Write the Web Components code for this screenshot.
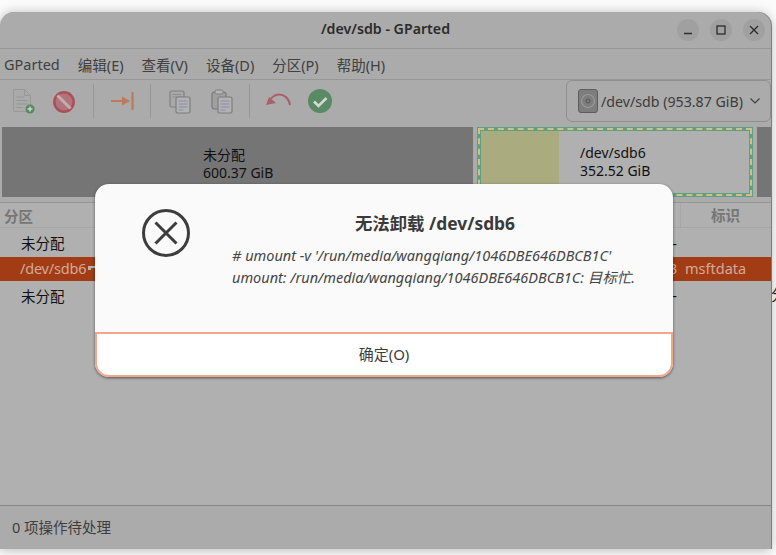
<!DOCTYPE html>
<html>
<head>
<meta charset="utf-8">
<title>GParted</title>
<style>
  html, body { margin: 0; height: 100%; background: #fbfbfb; overflow: hidden; }
  body { font-family: "Noto Sans", "Noto Sans CJK SC", sans-serif; font-size: 14.5px; }
</style>
</head>
<body>
<gp-desktop>
  <gp-window>
    <gp-titlebar title="/dev/sdb - GParted"></gp-titlebar>
    <gp-menubar>
      <span>GParted</span><span>编辑(E)</span><span>查看(V)</span><span>设备(D)</span><span>分区(P)</span><span>帮助(H)</span>
    </gp-menubar>
    <gp-toolbar></gp-toolbar>
    <gp-diskmap></gp-diskmap>
    <gp-table></gp-table>
    <gp-statusbar>0 项操作待处理</gp-statusbar>
  </gp-window>
  <gp-dialog heading="无法卸载 /dev/sdb6" button="确定(O)">
    <div># umount -v '/run/media/wangqiang/1046DBE646DBCB1C'</div>
    <div>umount: /run/media/wangqiang/1046DBE646DBCB1C: 目标忙.</div>
  </gp-dialog>
</gp-desktop>

<script>
  const CJK = '"Noto Sans", "Noto Sans CJK SC", sans-serif';

  class GpDesktop extends HTMLElement {
    constructor() {
      super();
      this.attachShadow({ mode: "open" });
      this.shadowRoot.innerHTML = `
        <style>
          :host { display: block; position: relative; width: 776px; height: 555px; overflow: hidden; }
          .behind { position: absolute; left: 771px; top: 283px; font-size: 15px; color: #222; font-family: ${CJK}; }
        </style>
        <div class="behind">分</div>
        <slot></slot>
      `;
    }
  }

  class GpWindow extends HTMLElement {
    constructor() {
      super();
      this.attachShadow({ mode: "open" });
      this.shadowRoot.innerHTML = `
        <style>
          :host {
            display: flex;
            flex-direction: column;
            box-sizing: border-box;
            width: 771px;
            height: 537px;
            margin-top: 12px;
            background: #ababab;
            border-radius: 14px 14px 0 0;
            box-shadow: 0 1px 12px rgba(0, 0, 0, 0.28), 1px 0 0 #8f8f8f;
            overflow: hidden;
            position: relative;
          }
        </style>
        <slot></slot>
      `;
    }
  }

  class GpTitlebar extends HTMLElement {
    constructor() {
      super();
      this.attachShadow({ mode: "open" });
    }
    connectedCallback() {
      this.shadowRoot.innerHTML = `
        <style>
          :host {
            display: flex;
            flex: none;
            box-sizing: border-box;
            height: 37px;
            align-items: center;
            justify-content: center;
            border-bottom: 1px solid #979797;
            position: relative;
            padding-bottom: 3px;
          }
          .title { font-size: 14.2px; font-weight: 600; color: #2b2b2b; }
          .btns { position: absolute; right: 6px; top: 7px; display: flex; gap: 11px; }
          .btn { width: 22px; height: 22px; border-radius: 50%; background: #a0a0a0; display: flex; align-items: center; justify-content: center; }
          svg { width: 12px; height: 12px; stroke: #2d2d2d; fill: none; stroke-width: 1.3; }
        </style>
        <div class="title">${this.getAttribute("title")}</div>
        <div class="btns">
          <div class="btn"><svg viewBox="0 0 12 12"><path d="M2 9.5h8"/></svg></div>
          <div class="btn"><svg viewBox="0 0 12 12"><rect x="2" y="2" width="8" height="8"/></svg></div>
          <div class="btn"><svg viewBox="0 0 12 12"><path d="M2 2l8 8M10 2l-8 8"/></svg></div>
        </div>
      `;
    }
  }

  class GpMenubar extends HTMLElement {
    constructor() {
      super();
      this.attachShadow({ mode: "open" });
      this.shadowRoot.innerHTML = `
        <style>
          :host {
            display: flex;
            flex: none;
            box-sizing: border-box;
            height: 31px;
            align-items: center;
            gap: 18px;
            padding-left: 4px;
            border-bottom: 1px solid #979797;
            color: #404040;
            font-size: 14.5px;
          }
          ::slotted(span) { white-space: nowrap; }
        </style>
        <slot></slot>
      `;
    }
  }

  class GpToolbar extends HTMLElement {
    constructor() {
      super();
      this.attachShadow({ mode: "open" });
      this.shadowRoot.innerHTML = `
        <style>
          :host {
            display: flex;
            flex: none;
            box-sizing: border-box;
            height: 47px;
            align-items: flex-start;
            padding-left: 2px;
            position: relative;
          }
          .tool { width: 42px; height: 42px; display: flex; align-items: center; justify-content: center; flex: none; }
          .tool svg { width: 26px; height: 26px; }
          .stop { margin: 0 1px 0 -1px; }
          .sep { width: 1px; height: 34px; background: #999; margin: 4px 7px 0; flex: none; }
          .combo {
            margin-left: auto;
            box-sizing: border-box;
            width: 205px;
            height: 42px;
            border: 1px solid #8f8f8f;
            border-radius: 6px;
            display: flex;
            align-items: center;
            padding-left: 11px;
            gap: 3px;
            color: #3c3c3c;
            font-size: 14.2px;
            white-space: nowrap;
          }
          .combo .chev { margin-left: 4px; }
        </style>
        <div class="tool"><svg viewBox="0 0 26 26" fill="none">
          <path d="M3.500 1.500h11l6 6v15a1 1 0 0 1-1 1h-15a1 1 0 0 1-1-1z" fill="#aaaaaa" stroke="#989898"/>
          <path d="M14.500 1.500v6h6" stroke="#989898"/>
          <path d="M6.500 9h8M6.500 12.500h11M6.500 16h11M6.500 19.500h6" stroke="#969696"/>
          <circle cx="20" cy="21" r="4.500" fill="#558a60"/>
          <path d="M17.500 21h5M20 18.500v5" stroke="#c9d8cc" stroke-width="1.500"/>
        </svg></div>
        <div class="tool stop"><svg viewBox="0 0 26 26" fill="none">
          <circle cx="13" cy="14" r="9.700" fill="#b0757b" stroke="#ad4f58" stroke-width="2.500"/>
          <path d="M6.500 7.500l13 13" stroke="#c5adaf" stroke-width="3"/>
        </svg></div>
        <div class="sep"></div>
        <div class="tool"><svg viewBox="0 0 26 26" fill="none">
          <path d="M2 13h18" stroke="#bd7a5d" stroke-width="2"/>
          <path d="M13 8.500l8 4.500-8 4.500z" fill="#bd7a5d"/>
          <path d="M23.500 4v18" stroke="#bd7a5d" stroke-width="2.200"/>
        </svg></div>
        <div class="sep"></div>
        <div class="tool"><svg viewBox="0 0 26 26" fill="none">
          <rect x="4" y="3" width="14" height="16" rx="1.500" fill="#a8a8a8" stroke="#808080" stroke-width="1.200"/>
          <path d="M6.500 6.500h9M6.500 9h9" stroke="#8d8d8d"/>
          <rect x="10" y="9" width="14" height="16" rx="1.500" fill="#b2b2b2" stroke="#7d7d7d" stroke-width="1.200"/>
          <path d="M12.500 13h9M12.500 16h9M12.500 19h9M12.500 22h5" stroke="#8c8cb0"/>
        </svg></div>
        <div class="tool"><svg viewBox="0 0 26 26" fill="none">
          <rect x="4" y="4" width="14" height="17" rx="2.500" fill="#a0a0a0" stroke="#787878" stroke-width="1.200"/>
          <rect x="7" y="2" width="8" height="4" rx="1.500" fill="#b5b5b5" stroke="#7c7c7c"/>
          <rect x="10" y="9" width="14" height="16" rx="1.500" fill="#b2b2b2" stroke="#7d7d7d" stroke-width="1.200"/>
          <path d="M12.500 13h9M12.500 16h9M12.500 19h9M12.500 22h5" stroke="#8c8cb0"/>
        </svg></div>
        <div class="sep"></div>
        <div class="tool"><svg viewBox="0 0 26 26" fill="none">
          <path d="M25 17C24 10 19 6.500 14 6.500 11 6.500 8.500 8 6 10.500" stroke="#ad5f67" stroke-width="2"/>
          <path d="M1 17l3-8 7 6z" fill="#ad5f67"/>
        </svg></div>
        <div class="tool"><svg viewBox="0 0 26 26" fill="none">
          <circle cx="13" cy="13" r="12" fill="#598a63"/>
          <path d="M7 13.500l4.500 4.500 8-8" stroke="#d2d8d2" stroke-width="2.600"/>
        </svg></div>
        <div class="combo">
          <svg width="20" height="24" viewBox="0 0 20 24" fill="none">
            <rect x="0.500" y="0.500" width="19" height="23" rx="2.500" fill="#7d7d7d" stroke="#5e5e5e"/>
            <circle cx="10" cy="12" r="6.500" stroke="#9a9a9a" stroke-width="1.200"/>
            <circle cx="10" cy="12" r="2" stroke="#585858"/>
          </svg>
          <span>/dev/sdb (953.87 GiB)</span>
          <svg class="chev" width="10" height="6" viewBox="0 0 10 6" fill="none"><path d="M0.500 0.500l4.500 4.500 4.500-4.500" stroke="#3c3c3c" stroke-width="1.100"/></svg>
        </div>
      `;
    }
  }

  class GpDiskmap extends HTMLElement {
    constructor() {
      super();
      this.attachShadow({ mode: "open" });
      this.shadowRoot.innerHTML = `
        <style>
          :host {
            display: flex;
            flex: none;
            box-sizing: border-box;
            height: 70px;
            padding: 0 0 0 2px;
            gap: 4px;
            color: #111;
            font-size: 14px;
            line-height: 18px;
          }
          .free { background: #757575; }
          .big { width: 471px; padding: 19px 0 0 201px; box-sizing: border-box; }
          .small { width: 14px; }
          .part {
            width: 276px;
            box-sizing: border-box;
            border: 4px solid #5fa085;
            outline: 2px dashed #c9c387;
            outline-offset: -3px;
            display: flex;
            background: #b0b0b0;
          }
          .used { width: 78px; background: #aaab7f; }
          .label { padding: 13px 0 0 21px; }
        </style>
        <div class="free big">未分配<br>600.37 GiB</div>
        <div class="part">
          <div class="used"></div>
          <div class="label">/dev/sdb6<br>352.52 GiB</div>
        </div>
        <div class="free small"></div>
      `;
    }
  }

  class GpTable extends HTMLElement {
    constructor() {
      super();
      this.attachShadow({ mode: "open" });
      this.shadowRoot.innerHTML = `
        <style>
          :host {
            display: block;
            flex: 1;
            margin-top: 5px;
            background: #b0b0b0;
            border-top: 1px solid #979797;
            color: #111;
            font-size: 14.5px;
          }
          .row { display: flex; height: 24px; box-sizing: border-box; align-items: center; white-space: nowrap; }
          .first { padding-bottom: 5px; }
          .last { padding-top: 4px; }
          .head {
            height: 24px;
            margin-bottom: 5px;
            border-bottom: 1px solid #a6a6a6;
            font-weight: 700;
            color: #767676;
            padding-left: 4px;
            box-sizing: content-box;
          }
          .name { width: 669px; padding-left: 21px; box-sizing: border-box; flex: none; }
          .fs { width: 8px; margin-right: 8px; text-align: right; flex: none; }
          .head .lead { width: 676px; flex: none; }
          .head .flags { border-left: 1px solid #a6a6a6; height: 24px; padding-left: 30px; line-height: 24px; }
          .sel { background: #a23c15; color: #d3aa98; padding-bottom: 3px; }
          .sel .name { padding-left: 20px; display: flex; align-items: center; gap: 2px; letter-spacing: -0.2px; }
        </style>
        <div class="row head"><div class="lead">分区</div><div class="flags">标识</div></div>
        <div class="row first"><div class="name">未分配</div><div class="fs">-</div></div>
        <div class="row sel">
          <div class="name">/dev/sdb6
            <svg width="8" height="6" viewBox="0 0 8 6"><path d="M0 1h8v2H3v2H0z" fill="#b9b3ae"/></svg>
          </div>
          <div class="fs">3</div>
          <div class="flags">msftdata</div>
        </div>
        <div class="row last"><div class="name">未分配</div><div class="fs">-</div></div>
      `;
    }
  }

  class GpStatusbar extends HTMLElement {
    constructor() {
      super();
      this.attachShadow({ mode: "open" });
      this.shadowRoot.innerHTML = `
        <style>
          :host {
            display: flex;
            flex: none;
            box-sizing: border-box;
            height: 44px;
            align-items: center;
            padding: 0 0 2px 12px;
            border-top: 1px solid #858585;
            color: #3d3d3d;
            font-size: 14.5px;
          }
        </style>
        <slot></slot>
      `;
    }
  }

  class GpDialog extends HTMLElement {
    constructor() {
      super();
      this.attachShadow({ mode: "open" });
    }
    connectedCallback() {
      this.shadowRoot.innerHTML = `
        <style>
          :host {
            display: flex;
            flex-direction: column;
            position: absolute;
            left: 95px;
            top: 184px;
            width: 578px;
            height: 193px;
            box-sizing: border-box;
            background: #fafafa;
            border-radius: 14px;
            box-shadow: 0 1px 3px rgba(0, 0, 0, 0.55);
            color: #3d3d3d;
          }
          .body { flex: 1; display: flex; padding: 25px 0 0 47px; }
          .icon { width: 48px; height: 48px; flex: none; margin-right: 42px; }
          .text { width: 406px; flex: none; }
          h1 { margin: 2px 0 9px; font-size: 17.4px; line-height: 24px; font-weight: 700; text-align: center; color: #3a3a3a; }
          .msg { font-size: 14.5px; line-height: 22px; font-style: italic; white-space: nowrap; color: #444; }
          button {
            flex: none;
            height: 45px;
            padding: 0 0 2px;
            border: 2px solid #f2a68e;
            border-radius: 0 0 14px 14px;
            background: #fff;
            color: #3d3d3d;
            font: inherit;
            font-size: 15px;
          }
        </style>
        <div class="body">
          <svg class="icon" viewBox="0 0 48 48" fill="none" stroke="#3d3d3d">
            <circle cx="24" cy="24" r="22.500" stroke-width="3"/>
            <path d="M13.500 13.500l21 21M34.500 13.500l-21 21" stroke-width="3"/>
          </svg>
          <div class="text">
            <h1>${this.getAttribute("heading")}</h1>
            <div class="msg"><slot></slot></div>
          </div>
        </div>
        <button>${this.getAttribute("button")}</button>
      `;
    }
  }

  customElements.define("gp-desktop", GpDesktop);
  customElements.define("gp-window", GpWindow);
  customElements.define("gp-titlebar", GpTitlebar);
  customElements.define("gp-menubar", GpMenubar);
  customElements.define("gp-toolbar", GpToolbar);
  customElements.define("gp-diskmap", GpDiskmap);
  customElements.define("gp-table", GpTable);
  customElements.define("gp-statusbar", GpStatusbar);
  customElements.define("gp-dialog", GpDialog);
</script>
</body>
</html>
